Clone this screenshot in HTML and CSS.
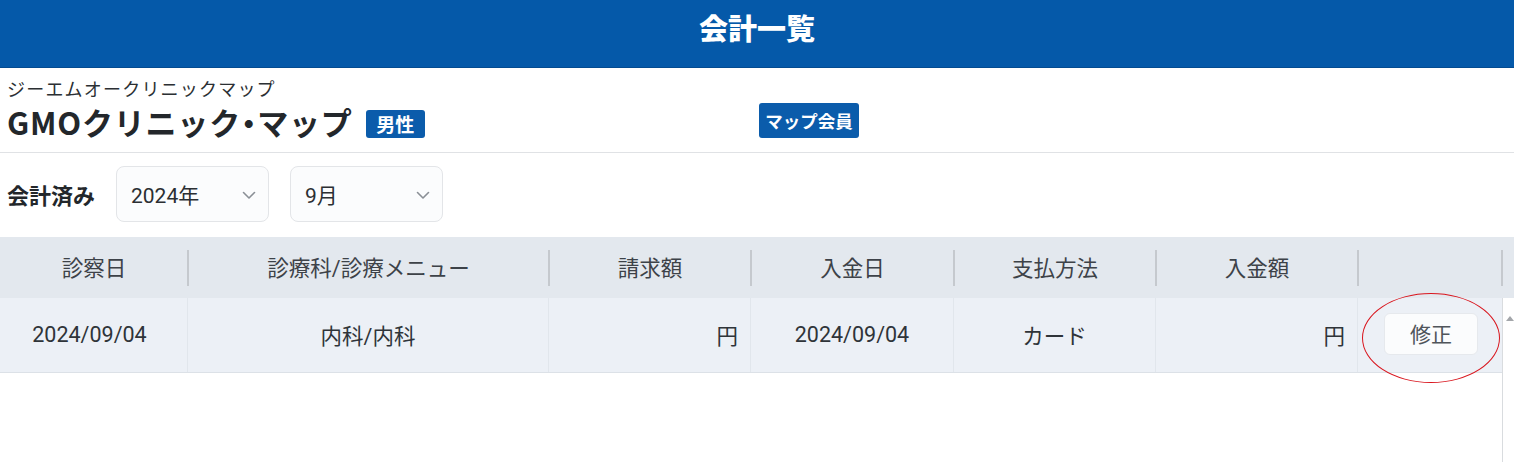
FILE: index.html
```html
<!DOCTYPE html>
<html lang="ja">
<head>
<meta charset="utf-8">
<title>会計一覧</title>
<link rel="stylesheet" href="styles.css">
</head>
<body>
<header class="topbar"><h1 class="topbar-title">会計一覧</h1></header>
<section class="info">
  <div class="info-left">
    <div class="kana">ジーエムオークリニックマップ</div>
    <div class="name"><span class="name-text">GMOクリニック<span class="dot">・</span>マップ</span><span class="badge badge-sm">男性</span></div>
  </div>
  <div class="info-right"><span class="badge badge-member">マップ会員</span></div>
</section>
<section class="filters">
  <div class="filter-label">会計済み</div>
  <div class="select">
    <span>2024年</span>
    <svg class="chev" width="14" height="9" viewBox="0 0 14 9"><path d="M1.5 1.5 L7 7 L12.5 1.5" fill="none" stroke="#8a8f96" stroke-width="1.6" stroke-linecap="round" stroke-linejoin="round"/></svg>
  </div>
  <div class="select">
    <span>9月</span>
    <svg class="chev" width="14" height="9" viewBox="0 0 14 9"><path d="M1.5 1.5 L7 7 L12.5 1.5" fill="none" stroke="#8a8f96" stroke-width="1.6" stroke-linecap="round" stroke-linejoin="round"/></svg>
  </div>
</section>
<section class="table">
  <div class="thead">
    <div class="th">診察日</div>
    <div class="th">診療科/診療メニュー</div>
    <div class="th">請求額</div>
    <div class="th">入金日</div>
    <div class="th">支払方法</div>
    <div class="th">入金額</div>
    <div class="th"></div>
    <div class="th th-scroll"></div>
  </div>
  <div class="tbody-wrap">
    <div class="tbody">
      <div class="tr">
        <div class="td">2024/09/04</div>
        <div class="td">内科/内科</div>
        <div class="td td-right">円</div>
        <div class="td">2024/09/04</div>
        <div class="td">カード</div>
        <div class="td td-right">円</div>
        <div class="td td-action">
          <button class="btn-edit">修正</button>
          <span class="ring"></span>
        </div>
      </div>
    </div>
    <div class="scrolltrack"><span class="scroll-up"></span></div>
  </div>
</section>
</body>
</html>
```
FILE: styles.css
```css
* { box-sizing: border-box; }
html, body { margin: 0; padding: 0; background: #ffffff; }
body {
  font-family: "Roboto", "Noto Sans CJK JP", "Noto Sans", sans-serif;
  color: #2b2f33;
  width: 1514px;
  height: 462px;
  overflow: hidden;
}
.topbar {
  height: 68px;
  background: #0559a9;
  border-bottom: 1px solid #044b90;
  display: flex;
  align-items: center;
  justify-content: center;
}
.topbar-title {
  margin: 0;
  color: #ffffff;
  font-family: "Noto Sans CJK JP", sans-serif;
  font-size: 29px;
  font-weight: 900;
  line-height: 1;
  padding-bottom: 12px;
}
.info {
  height: 85px;
  display: grid;
  grid-template-columns: 759px auto;
  padding: 8px 7px 0;
  border-bottom: 1px solid #e0e2e5;
}
.info-left { display: flex; flex-direction: column; }
.kana {
  font-family: "Noto Sans CJK JP", sans-serif;
  font-size: 18px;
  line-height: 24px;
  letter-spacing: 1.2px;
  color: #2b2f33;
}
.name {
  font-family: "Noto Sans CJK JP", sans-serif;
  font-size: 31px;
  font-weight: 700;
  line-height: 40px;
  margin-top: 2px;
  color: #23272b;
  display: flex;
  align-items: center;
}
.name-text { letter-spacing: 0.8px; }
.dot { font-feature-settings: "halt"; }
.info-right {
  margin-left: -7px;
  padding-top: 27px;
}
.badge {
  display: inline-flex;
  align-items: center;
  justify-content: center;
  background: #0b5cab;
  color: #ffffff;
  font-family: "Noto Sans CJK JP", sans-serif;
  font-weight: 700;
  border-radius: 3px;
}
.badge-sm {
  margin-left: 13px;
  width: 59px;
  height: 28px;
  font-size: 19px;
  margin-top: 4px;
}
.badge-member {
  width: 100px;
  height: 35px;
  font-size: 17.5px;
}
.filters {
  display: flex;
  align-items: center;
  padding: 13px 7px 15px;
  gap: 20px;
}
.filter-label {
  width: 89px;
  font-family: "Noto Sans CJK JP", sans-serif;
  font-size: 22px;
  font-weight: 700;
  color: #23272b;
}
.select {
  width: 153px;
  height: 56px;
  border: 1px solid #e3e5e8;
  border-radius: 8px;
  background: #fbfcfd;
  display: flex;
  align-items: center;
  justify-content: space-between;
  padding: 0 12px 0 14px;
  font-size: 21px;
  color: #2b2f33;
}
.select + .select { margin-left: 1px; }
.chev { display: block; margin-top: 2px; }
.thead {
  display: grid;
  grid-template-columns: 188px 361px 202px 203px 202px 202px 144px 12px;
  height: 61px;
  background: #e3e8ee;
}
.th {
  position: relative;
  display: flex;
  align-items: center;
  justify-content: center;
  font-size: 21.5px;
  color: #3d4248;
  padding-bottom: 2px;
}
.th::after {
  content: "";
  position: absolute;
  right: -1px;
  top: 13px;
  height: 36px;
  width: 2px;
  background: #c5c9ce;
}
.th-scroll::after, .th:nth-child(7)::after { display: none; }
.th-scroll::before {
  content: "";
  position: absolute;
  left: -1px;
  top: 13px;
  height: 36px;
  width: 2px;
  background: #c5c9ce;
}
.tbody-wrap {
  display: flex;
  height: 164px;
}
.tbody { flex: 1; }
.tr {
  display: grid;
  grid-template-columns: 188px 361px 202px 203px 202px 202px 144px;
  height: 75px;
  background: #ecf0f6;
  border-bottom: 1px solid #dce1e7;
}
.td {
  display: flex;
  align-items: center;
  justify-content: center;
  font-size: 21.5px;
  color: #2f3439;
  border-right: 1px solid #e1e6ec;
  padding-bottom: 2px;
}
.td:first-child { padding-right: 8px; }
.td:last-child { border-right: 0; }
.td-right { justify-content: flex-end; padding-right: 12px; }
.td-action { position: relative; }
.btn-edit {
  width: 94px;
  height: 42px;
  border: 1px solid #e6e9ed;
  border-radius: 6px;
  background: #fbfcfd;
  font-family: "Noto Sans CJK JP", sans-serif;
  font-size: 21px;
  color: #50555b;
  margin-left: 2px;
  padding: 0 0 2px;
  cursor: pointer;
}
.ring {
  position: absolute;
  left: 4px;
  top: -5px;
  width: 138px;
  height: 90px;
  border: 1.8px solid #d9161e;
  border-radius: 50%;
  pointer-events: none;
}
.scrolltrack {
  width: 12px;
  border-left: 1px solid #d9dcdf;
  background: #ffffff;
  position: relative;
}
.scroll-up {
  position: absolute;
  left: 3px;
  top: 18px;
  width: 0;
  height: 0;
  border-left: 4px solid transparent;
  border-right: 4px solid transparent;
  border-bottom: 5px solid #a3a6aa;
}
```
